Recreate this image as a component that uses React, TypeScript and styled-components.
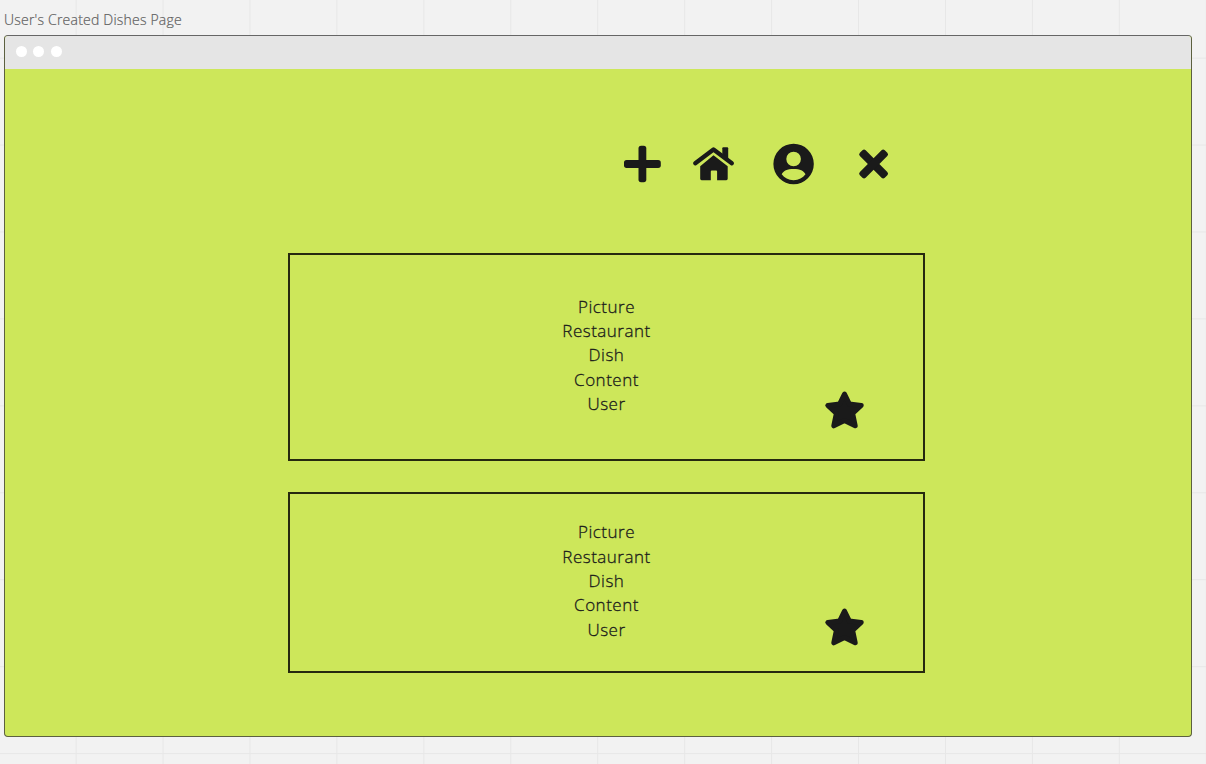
import React from "react";
import styled, { createGlobalStyle } from "styled-components";

const ink = "#1a1a1a";
const lime = "#cde75a";

const GlobalStyle = createGlobalStyle`
  * { box-sizing: border-box; }
  body { margin: 0; overflow: hidden; font-family: "Open Sans", sans-serif; }
`;

const Board = styled.main`
  width: 1206px;
  height: 764px;
  padding: 9px 14px 27.5px 4px;
  display: flex;
  flex-direction: column;
  background-color: #f2f2f2;
  background-image: linear-gradient(90deg, #e7e7e7 1px, transparent 1px),
    linear-gradient(#e7e7e7 1px, transparent 1px);
  background-size: 86.95px 86.95px;
  background-position: 75.6px 57.6px;
`;

const FrameTitle = styled.h1`
  margin: 0;
  height: 26px;
  font-size: 14px;
  line-height: 21px;
  font-weight: 300;
  letter-spacing: 0.21px;
  color: #606060;
  -webkit-text-stroke: 0.2px #606060;
  white-space: nowrap;
`;

const Browser = styled.section`
  flex: 1;
  display: flex;
  flex-direction: column;
  border: 1px solid #5c6040;
  border-top-color: #666;
  border-radius: 4px;
  overflow: hidden;
  background: ${lime};
`;

const TitleBar = styled.header`
  height: 32.5px;
  padding: 0 0 1px 11px;
  display: flex;
  align-items: center;
  gap: 6.4px;
  background: #e5e5e5;
`;

const Dot = styled.span`
  width: 11px;
  height: 11px;
  border-radius: 50%;
  background: #fff;
`;

const Page = styled.div`
  display: flex;
  flex-direction: column;
  padding: 73px 0 0 283px;
`;

const Nav = styled.nav`
  height: 44px;
  margin-bottom: 67.5px;
  padding-left: 334.7px;
  display: flex;
  align-items: center;
`;

const Icon = styled.svg<{ $gap?: number }>`
  display: block;
  flex: none;
  margin-left: ${(p) => p.$gap ?? 0}px;
  fill: ${ink};
`;

const Card = styled.article<{ $height: number; $top: number; $gap?: number }>`
  position: relative;
  width: 637px;
  height: ${(p) => p.$height}px;
  margin-bottom: ${(p) => p.$gap ?? 0}px;
  padding-top: ${(p) => p.$top}px;
  border: 2px solid #26290f;
`;

const Details = styled.ul`
  margin: 0;
  padding: 0;
  list-style: none;
  text-align: center;
  font-size: 17px;
  font-weight: 300;
  line-height: 24.4px;
  letter-spacing: 0.5px;
  color: ${ink};
  -webkit-text-stroke: 0.3px ${ink};
`;

const Favourite = styled.svg<{ $bottom: number }>`
  position: absolute;
  right: 58px;
  bottom: ${(p) => p.$bottom}px;
  fill: ${ink};
  stroke: ${ink};
  stroke-width: 5;
  stroke-linejoin: round;
`;

const fields = ["Picture", "Restaurant", "Dish", "Content", "User"];

function DishCard(props: { height: number; top: number; star: number; gap?: number }) {
  return (
    <Card $height={props.height} $top={props.top} $gap={props.gap}>
      <Details>
        {fields.map((f) => (
          <li key={f}>{f}</li>
        ))}
      </Details>
      <Favourite $bottom={props.star} width="41" height="40" viewBox="0 0 41 40">
        <path d="M20.5 4 L25.4 14.1 L37.2 15.5 L28.6 23.3 L31.2 35.8 L20.5 30.4 L9.8 35.8 L12.4 23.3 L3.8 15.5 L15.6 14.1Z" />
      </Favourite>
    </Card>
  );
}

export default function App() {
  return (
    <>
      <GlobalStyle />
      <Board>
        <FrameTitle>User's Created Dishes Page</FrameTitle>
        <Browser>
          <TitleBar>
            <Dot />
            <Dot />
            <Dot />
          </TitleBar>
          <Page>
            <Nav>
              <Icon width="40" height="40" viewBox="0 0 40 40">
                <rect x="1" y="16.1" width="36.8" height="7.8" rx="2.6" />
                <rect x="15.5" y="1.8" width="7.8" height="36.4" rx="2.6" />
              </Icon>
              <Icon $gap={29} width="44" height="40" viewBox="0 0 44 40">
                <path d="M30.3 4.3Q30.3 3.3 31.3 3.3H35.2Q36.2 3.3 36.2 4.3V17L30.3 12Z" />
                <path
                  d="M3.3 19.2 L21.5 5.6 L39.8 19.2"
                  fill="none"
                  stroke={ink}
                  strokeWidth="4.4"
                  strokeLinecap="round"
                  strokeLinejoin="round"
                />
                <path d="M21.5 11.2 L35.7 22.3 V34.8 Q35.7 36.2 34.3 36.2 H25.1 V27.6 Q25.1 26.6 24.1 26.6 H19.8 Q18.8 26.6 18.8 27.6 V36.2 H9.6 Q8.2 36.2 8.2 34.8 V22.3Z" />
              </Icon>
              <Icon $gap={36} width="44" height="44" viewBox="0.4 0 44 44">
                <path
                  fillRule="evenodd"
                  d="M22 1.8a20.2 20.2 0 1 0 0 40.4a20.2 20.2 0 1 0 0-40.4ZM22 9.7a7.3 7.3 0 1 1 0 14.6a7.3 7.3 0 1 1 0-14.6ZM10.1 32.3C12 28.7 15.4 27 22 27C28.6 27 32 28.7 33.9 32.3C31.2 36 27.2 38.2 22 38.2C16.8 38.2 12.8 36 10.1 32.3Z"
                />
              </Icon>
              <Icon $gap={38} width="40" height="40" viewBox="0.4 0 40 40">
                <g transform="rotate(45 20 20)">
                  <rect x="2.4" y="15.9" width="35.2" height="8.2" rx="2.3" />
                  <rect x="15.9" y="2.4" width="8.2" height="35.2" rx="2.3" />
                </g>
              </Icon>
            </Nav>
            <DishCard height={208} top={39.5} star={29} gap={31} />
            <DishCard height={180.5} top={26.15} star={24} />
          </Page>
        </Browser>
      </Board>
    </>
  );
}
